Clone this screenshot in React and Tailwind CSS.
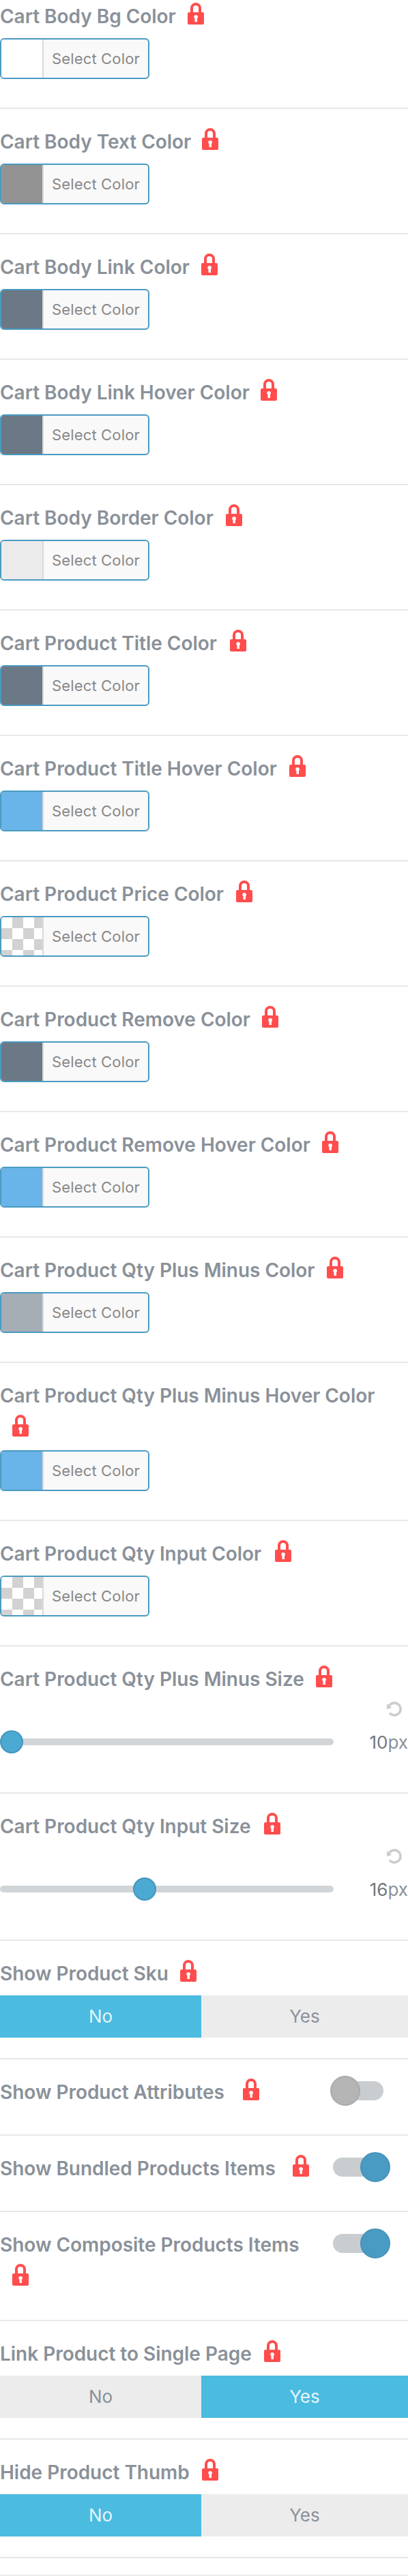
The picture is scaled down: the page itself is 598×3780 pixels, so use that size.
function Lock({ className = "" }) {
  return (
    <svg viewBox="0 0 24 32" className={"inline-block h-8 w-6 shrink-0 " + className} aria-hidden="true">
      <path d="M6 15V8a6 6 0 0 1 12 0V15" fill="none" stroke="#ff4d4d" strokeWidth="4" />
      <rect x="0" y="14" width="24" height="18" rx="2" fill="#ff4d4d" />
      <path d="M12 18a2.9 2.9 0 0 0-1.5 5.3V28h3.5v-4.9A2.9 2.9 0 0 0 12 18Z" fill="#fff" />
    </svg>
  );
}

function Title({ text, width, wrap }) {
  return (
    <div className="flex flex-wrap items-center text-[28px] leading-[48px] font-semibold tracking-[-0.03px] text-[#8a9199]">
      <span className={"block whitespace-nowrap " + (wrap ? "w-full" : width)}>{text}</span>
      {wrap ? (
        <span className="flex h-12 w-full items-center">
          <Lock className="-mt-2 ml-[18px]" />
        </span>
      ) : (
        <Lock className="-mt-2 ml-[18px]" />
      )}
    </div>
  );
}

function Row({ children, first, className }) {
  return (
    <section className={"border-b-2 border-[#e8e8e8] " + (first ? "pt-0 " : "pt-6 ") + className}>{children}</section>
  );
}

function ColorRow({ swatch, first, ...title }) {
  return (
    <Row first={first} className="pb-[42px]">
      <Title {...title} />
      <button className="mt-2 flex h-[60px] w-[219px] overflow-hidden rounded-md border-2 border-[#4a9bc1] bg-[#f9f9f9]">
        <span className={"h-full w-[62px] shrink-0 border-r-2 border-[#d9d9d9] " + swatch} />
        <span className="flex-1 pl-3 text-left text-[22px] leading-[56px] tracking-[0.15px] whitespace-nowrap text-[#888]">
          Select Color
        </span>
      </button>
    </Row>
  );
}

function SliderRow({ value, thumb, ...title }) {
  return (
    <Row className="pb-[37px]">
      <Title {...title} />
      <div className="mt-[9px] flex h-[22px] justify-end pr-[9px]">
        <svg viewBox="0 0 22 22" className="h-[22px] w-[22px]" aria-hidden="true">
          <path d="M3.5 6A9 9 0 1 1 4 16.5" fill="none" stroke="#ccc" strokeWidth="3.6" />
          <path d="M0 3V11L7.3 9Z" fill="#ccc" />
        </svg>
      </div>
      <div className="flex h-[74px] items-center justify-between">
        <div className="flex h-[10px] w-[489px] items-center rounded-full bg-[#d1d5d8]">
          <span className={"h-[34px] w-[34px] rounded-full border-2 border-[#4496c0] bg-[#4ca9d1] " + thumb} />
        </div>
        <span className="text-[26px] text-[#8a9199]">
          <span className="text-[#72777c]">{value}</span>px
        </span>
      </div>
    </Row>
  );
}

function Option({ label, active, width }) {
  return (
    <span
      className={
        "text-center text-[26px] leading-[62px] " + width + (active ? " bg-[#4cbbe0] text-[#e4f5fb]" : " bg-[#ececec] text-[#8a9199]")
      }
    >
      {label}
    </span>
  );
}

function ChoiceRow({ yes, ...title }) {
  return (
    <Row className="pb-[30px]">
      <Title {...title} />
      <div className="mt-2 flex">
        <Option label="No" active={!yes} width="w-[295px]" />
        <Option label="Yes" active={yes} width="flex-1" />
      </div>
    </Row>
  );
}

function ToggleRow({ on, ...title }) {
  return (
    <Row className="flex justify-between pb-[38px]">
      <div className="w-[470px]">
        <Title {...title} />
      </div>
      <div className="relative mr-[26px] flex h-11 w-[88px] items-center pl-1">
        <span className="h-7 w-[74px] rounded-full bg-[#c9cdd0]" />
        <span
          className={
            "absolute top-0 h-11 w-11 rounded-full border-2 " +
            (on ? "right-0 border-[#4693bb] bg-[#4a9bc4]" : "left-0 border-[#aaa] bg-[#b5b5b5]")
          }
        />
      </div>
    </Row>
  );
}

const CHECKER =
  "bg-[conic-gradient(#d2d2d2_25%,#fff_0_50%,#d2d2d2_0_75%,#fff_0)] bg-[length:32px_32px]";

export default function App() {
  return (
    <main className="h-[3780px] w-[598px] overflow-hidden bg-white font-['Inter',sans-serif]">
      <ColorRow first text="Cart Body Bg Color" width="w-[257px]" swatch="bg-white" />
      <ColorRow text="Cart Body Text Color" width="w-[278px]" swatch="bg-[#939393]" />
      <ColorRow text="Cart Body Link Color" width="w-[277px]" swatch="bg-[#6b7885]" />
      <ColorRow text="Cart Body Link Hover Color" width="w-[364px]" swatch="bg-[#6b7885]" />
      <ColorRow text="Cart Body Border Color" width="w-[313px]" swatch="bg-[#ebebeb]" />
      <ColorRow text="Cart Product Title Color" width="w-[319px]" swatch="bg-[#6b7885]" />
      <ColorRow text="Cart Product Title Hover Color" width="w-[406px]" swatch="bg-[#69b4e8]" />
      <ColorRow text="Cart Product Price Color" width="w-[328px]" swatch={CHECKER} />
      <ColorRow text="Cart Product Remove Color" width="w-[366px]" swatch="bg-[#6b7885]" />
      <ColorRow text="Cart Product Remove Hover Color" width="w-[454px]" swatch="bg-[#69b4e8]" />
      <ColorRow text="Cart Product Qty Plus Minus Color" width="w-[461px]" swatch="bg-[#a5adb5]" />
      <ColorRow wrap text="Cart Product Qty Plus Minus Hover Color" swatch="bg-[#69b4e8]" />
      <ColorRow text="Cart Product Qty Input Color" width="w-[385px]" swatch={CHECKER} />
      <SliderRow text="Cart Product Qty Plus Minus Size" width="w-[445px]" value="10" thumb="ml-0" />
      <SliderRow text="Cart Product Qty Input Size" width="w-[369px]" value="16" thumb="ml-[195px]" />
      <ChoiceRow text="Show Product Sku" width="w-[246px]" />
      <ToggleRow text="Show Product Attributes" width="w-[338px]" />
      <ToggleRow on text="Show Bundled Products Items" width="w-[411px]" />
      <ToggleRow on wrap text="Show Composite Products Items" />
      <ChoiceRow yes text="Link Product to Single Page" width="w-[369px]" />
      <ChoiceRow text="Hide Product Thumb" width="w-[278px]" />
      <div className="h-[26px] border-b-2 border-[#ececec]" />
    </main>
  );
}
